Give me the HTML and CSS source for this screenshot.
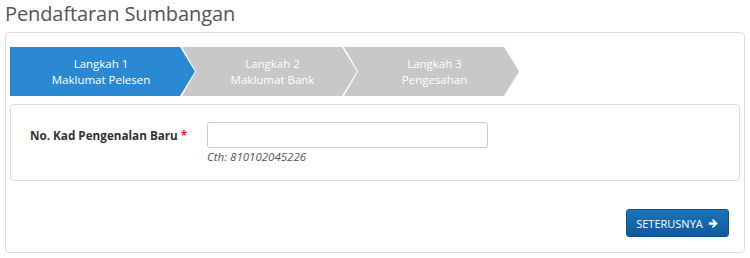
FILE: index.html
```html
<!DOCTYPE html>
<html>
<head>
<meta charset="utf-8">
<link rel="stylesheet" href="styles.css">
</head>
<body>
<h1 class="title">Pendaftaran Sumbangan</h1>
<div class="panel">
  <div class="steps">
    <div class="step step-first active"><span>Langkah 1</span><span>Maklumat Pelesen</span></div>
    <div class="step"><span>Langkah 2</span><span>Maklumat Bank</span></div>
    <div class="step"><span>Langkah 3</span><span>Pengesahan</span></div>
  </div>
  <div class="form-box">
    <div class="form-row">
      <label class="label">No. Kad Pengenalan Baru <span class="req">*</span></label>
      <div class="field">
        <input class="input" type="text">
        <div class="hint">Cth: 810102045226</div>
      </div>
    </div>
  </div>
  <div class="actions">
    <button class="btn">SETERUSNYA
      <svg class="arrow" viewBox="0 0 12 12" width="11" height="11"><path d="M1 4.6h5.4L4.2 2.4 5.6 1l5 5-5 5-1.4-1.4 2.2-2.2H1z" fill="#fff"/></svg>
    </button>
  </div>
</div>
</body>
</html>
```
FILE: styles.css
```css
html, body { margin: 0; padding: 0; background: #fff; }
body { padding: 0 5px; font-family: "Open Sans", "Liberation Sans", sans-serif; color: #333; }
.title { margin: 0; height: 32px; font-size: 20px; font-weight: 400; line-height: 28px; color: #555; letter-spacing: -0.1px; }
.panel { border: 1px solid #ddd; border-radius: 4px; padding: 14px 4px 15px 4px; box-sizing: border-box; height: 221px; }
.steps { display: flex; height: 49px; }
.step { width: 175px; height: 49px; margin-right: -14px; background: #c8c8c8; color: #fff; font-size: 11.5px; line-height: 16px; display: flex; flex-direction: column; justify-content: center; align-items: center; clip-path: polygon(0 0, calc(100% - 15px) 0, 100% 50%, calc(100% - 15px) 100%, 0 100%, 14px 50%); padding-left: 6px; box-sizing: border-box; }
.step + .step { margin-left: 1px; }
.step-first { width: 185px; clip-path: polygon(0 0, calc(100% - 15px) 0, 100% 50%, calc(100% - 15px) 100%, 0 100%); padding-left: 0; padding-right: 3px; }
.step.active { background: #2a89d2; }
.form-box { margin-top: 8px; border: 1px solid #ddd; border-radius: 4px; height: 77px; box-sizing: border-box; padding: 17px 0 0 19px; }
.form-row { display: flex; }
.label { width: 177px; font-size: 11.7px; font-weight: 700; color: #333; padding-top: 5px; line-height: 17px; }
.req { color: #e02020; }
.field { display: flex; flex-direction: column; }
.input { width: 281px; height: 26px; box-sizing: border-box; border: 1px solid #ccc; border-radius: 3px; margin: 0; }
.hint { font-size: 11.5px; font-style: italic; color: #555; margin-top: 1px; line-height: 16px; }
.actions { display: flex; justify-content: flex-end; padding: 28px 11px 0 0; }
.btn { width: 103px; height: 28px; border: 1px solid #0e5189; border-radius: 3px; background: linear-gradient(#1c74b9, #0f5a9c); color: #fff; font-family: "Open Sans", "Liberation Sans", sans-serif; font-size: 11px; padding: 0; display: flex; align-items: center; justify-content: center; gap: 5px; }
.arrow { display: block; }
```
